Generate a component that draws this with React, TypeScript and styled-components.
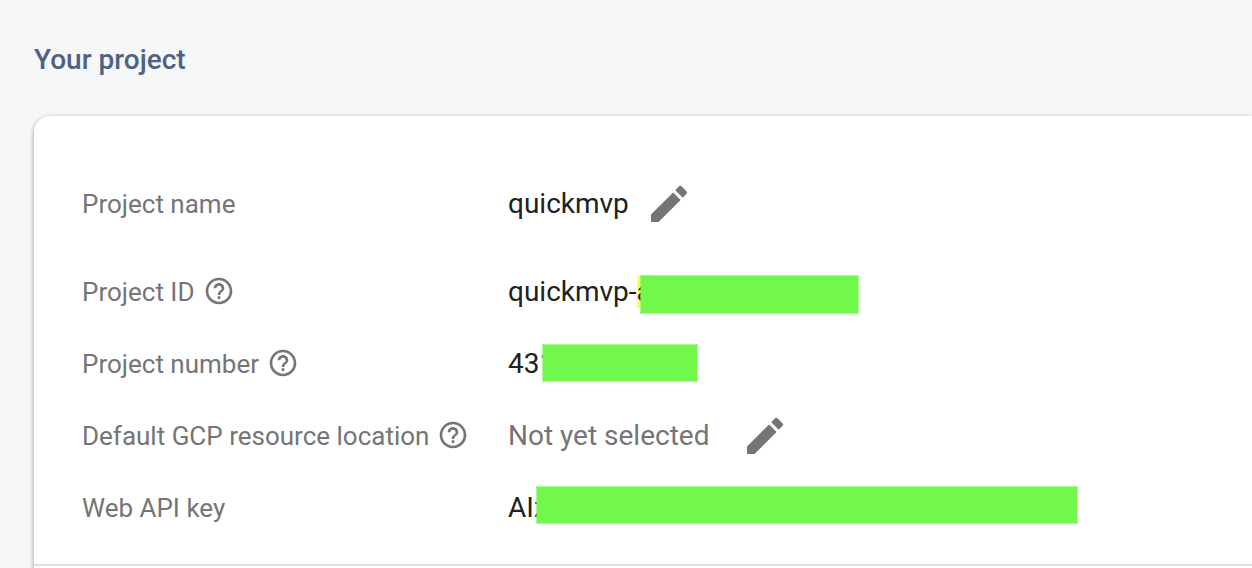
import React from "react";
import styled, { createGlobalStyle } from "styled-components";
import { MdEdit, MdHelpOutline } from "react-icons/md";

const GlobalStyle = createGlobalStyle`
  * { box-sizing: border-box; }
  html { scrollbar-width: none; }
  body {
    margin: 0;
    background: #f6f7f9;
    font-family: Roboto, "Liberation Sans", sans-serif;
  }
`;

const Page = styled.main`
  padding: 40px 0 0 34px;
  overflow: hidden;
`;

const Title = styled.h1`
  margin: 0 0 36px;
  font-size: 28px;
  line-height: 40px;
  font-weight: 500;
  color: #4e6282;
`;

const Card = styled.section`
  padding-bottom: 48px;
  background: #fff;
  border-top-left-radius: 16px;
  box-shadow: 0 4px 6px rgba(0, 0, 0, 0.26), 0 0 4px rgba(0, 0, 0, 0.14);
`;

const Details = styled.dl`
  margin: 0;
  padding: 52px 48px 20px;
  border-bottom: 2px solid #e0e0e0;
`;

const Row = styled.div<{ $spaced?: boolean }>`
  display: grid;
  grid-template-columns: 426px 1fr;
  align-items: center;
  height: 72px;
  margin-bottom: ${(p) => (p.$spaced ? 16 : 0)}px;
`;

const Label = styled.dt`
  display: flex;
  align-items: center;
  gap: 8px;
  font-size: 26px;
  line-height: 32px;
  color: #757575;
  white-space: nowrap;
`;

const Value = styled.dd<{ $muted?: boolean; $gap?: number }>`
  position: relative;
  display: flex;
  align-items: center;
  gap: ${(p) => p.$gap ?? 0}px;
  margin: 0;
  font-size: 28px;
  line-height: 32px;
  color: ${(p) => (p.$muted ? "#757575" : "#212121")};
  white-space: nowrap;
`;

const IconButton = styled.button`
  display: flex;
  padding: 0;
  border: 0;
  background: none;
  color: #757575;
  cursor: pointer;
`;

const HelpButton = styled(IconButton)`
  padding-bottom: 2px;
`;

const Highlight = styled.mark`
  background: #ffff54;
  color: inherit;
`;

const Redaction = styled.span<{ $left: number; $top: number; $width: number; $height: number }>`
  position: absolute;
  left: ${(p) => p.$left}px;
  top: ${(p) => p.$top}px;
  width: ${(p) => p.$width}px;
  height: ${(p) => p.$height}px;
  border: 1px solid rgba(114, 248, 76, 0.6);
  background: #72f84c;
  background-clip: padding-box;
`;

const Help = ({ topic }: { topic: string }) => (
  <HelpButton type="button" aria-label={`Help: ${topic}`}>
    <MdHelpOutline size={32} />
  </HelpButton>
);

const Edit = ({ topic }: { topic: string }) => (
  <IconButton type="button" aria-label={`Edit ${topic}`}>
    <MdEdit size={48} />
  </IconButton>
);

export default function App() {
  return (
    <>
      <GlobalStyle />
      <Page>
        <Title>Your project</Title>
        <Card>
          <Details>
            <Row $spaced>
              <Label>Project name</Label>
              <Value $gap={16}>
                quickmvp
                <Edit topic="project name" />
              </Value>
            </Row>
            <Row>
              <Label>
                Project ID
                <Help topic="project ID" />
              </Label>
              <Value>
                <span>
                  quickmvp-<Highlight>a</Highlight>
                </span>
                <Redaction $left={132} $top={-1} $width={219} $height={39} />
              </Value>
            </Row>
            <Row>
              <Label>
                Project number
                <Help topic="project number" />
              </Label>
              <Value>
                431
                <Redaction $left={34} $top={-4} $width={156} $height={38} />
              </Value>
            </Row>
            <Row>
              <Label>
                Default GCP resource location
                <Help topic="default GCP resource location" />
              </Label>
              <Value $muted $gap={32}>
                Not yet selected
                <Edit topic="default GCP resource location" />
              </Value>
            </Row>
            <Row>
              <Label>Web API key</Label>
              <Value>
                AIz
                <Redaction $left={28} $top={-6} $width={542} $height={38} />
              </Value>
            </Row>
          </Details>
        </Card>
      </Page>
    </>
  );
}
